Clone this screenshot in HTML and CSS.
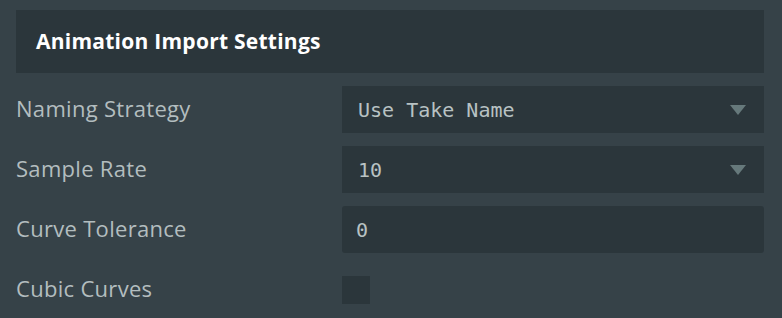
FILE: index.html
```html
<!DOCTYPE html>
<html lang="en">
<head>
    <meta charset="UTF-8">
    <meta name="viewport" content="width=device-width, initial-scale=1.0">
    <title>Animation Import Settings</title>
    <link rel="stylesheet" href="styles.css">
</head>
<body>

<div class="panel">
    <!-- Title bar -->
    <div class="panel-header">
        <h2>Animation Import Settings</h2>
    </div>

    <!-- Settings rows -->
    <div class="settings">
        <label class="setting-label" for="naming">Naming Strategy</label>
        <div class="select-box" id="naming">
            <span class="select-value">Use Take Name</span>
            <span class="select-arrow"></span>
        </div>

        <label class="setting-label" for="sample-rate">Sample Rate</label>
        <div class="select-box" id="sample-rate">
            <span class="select-value">10</span>
            <span class="select-arrow"></span>
        </div>

        <label class="setting-label" for="tolerance">Curve Tolerance</label>
        <input type="text" id="tolerance" class="input-field" value="0">

        <label class="setting-label" for="cubic">Cubic Curves</label>
        <div class="check-cell">
            <input type="checkbox" id="cubic" class="check-box">
        </div>
    </div>
</div>

</body>
</html>
```

FILE: styles.css
```css
body {
    margin: 0;
    padding: 0;
    background-color: #364248;
    font-family: "Open Sans", "Lato", sans-serif;
}

.panel {
    padding: 10px 18px 0 16px;
}

.panel-header {
    background-color: #2b363b;
    height: 63px;
    padding: 0 20px;
    display: flex;
    align-items: center;
}

.panel-header h2 {
    margin: 0 0 2px 0;
    color: #ffffff;
    font-size: 21px;
    font-weight: 700;
    letter-spacing: 0.25px;
}

.settings {
    display: grid;
    grid-template-columns: 326px 1fr;
    grid-auto-rows: 47px;
    row-gap: 13px;
    margin-top: 13px;
    align-items: center;
}

.setting-label {
    color: #b3bdbf;
    font-size: 22px;
    letter-spacing: 0.3px;
    margin-bottom: 4px;
}

.select-box {
    height: 47px;
    box-sizing: border-box;
    background-color: #2b363b;
    padding: 0 18px 0 16px;
    display: flex;
    align-items: center;
    justify-content: space-between;
}

.select-value,
.input-field {
    font-family: "DejaVu Sans Mono", monospace;
    font-size: 20px;
    color: #b8c2c3;
}

.select-arrow {
    width: 0;
    height: 0;
    border-left: 8px solid transparent;
    border-right: 8px solid transparent;
    border-top: 10px solid #66797b;
}

.input-field {
    height: 47px;
    box-sizing: border-box;
    background-color: #2b363b;
    border: none;
    border-radius: 3px;
    padding: 0 14px;
    outline: none;
    width: 100%;
}

.check-cell {
    display: flex;
    align-items: center;
}

.check-box {
    appearance: none;
    margin: 0;
    width: 28px;
    height: 28px;
    background-color: #2b363b;
}
```
